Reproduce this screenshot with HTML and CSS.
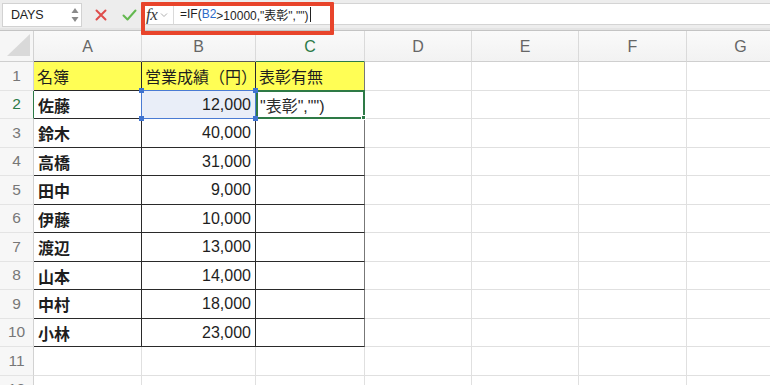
FILE: index.html
```html
<!DOCTYPE html>
<html lang="ja">
<head>
<meta charset="utf-8">
<title>Excel</title>
<link rel="stylesheet" href="styles.css">
</head>
<body>
<div class="app">
  <div class="toolbar">
    <div class="namebox">
      <span class="name">DAYS</span>
      <svg class="stepper" width="8" height="16" viewBox="0 0 8 16"><path d="M4 1 L7.5 6 L0.5 6 Z" fill="#8a8a8a"/><path d="M4 15 L7.5 10 L0.5 10 Z" fill="#8a8a8a"/></svg>
    </div>
    <div class="actions">
      <svg class="cancel" width="12" height="12" viewBox="0 0 12 12"><path d="M1.5 1.5 L10.5 10.5 M10.5 1.5 L1.5 10.5" stroke="#df4d4b" stroke-width="2" stroke-linecap="round"/></svg>
      <svg class="enter" width="15" height="12" viewBox="0 0 15 12"><path d="M1.5 6.5 L5.5 10.5 L13.5 1.5" stroke="#63b84f" stroke-width="2" fill="none" stroke-linecap="round" stroke-linejoin="round"/></svg>
    </div>
    <div class="fxarea">
      <span class="fx">fx</span>
      <svg class="chev" width="8" height="6" viewBox="0 0 8 6"><path d="M1 1.5 L4 4.5 L7 1.5" stroke="#b0b0b0" stroke-width="1" fill="none"/></svg>
    </div>
    <div class="formula"><span>=IF(</span><span class="ref">B2</span><span>&gt;10000,"表彰","")</span><span class="caret"></span></div>
  </div>

  <div class="sheet">
    <div class="corner"><svg width="26" height="24" viewBox="0 0 26 24"><path d="M25 1 L25 23 L2 23 Z" fill="#d9d9d9"/></svg></div>
    <div class="colh hd">A</div>
    <div class="colh hd">B</div>
    <div class="colh hd active">C</div>
    <div class="colh">D</div>
    <div class="colh">E</div>
    <div class="colh">F</div>
    <div class="colh">G</div>

    <div class="rowh">1</div>
    <div class="c t y">名簿</div>
    <div class="c t y">営業成績（円）</div>
    <div class="c t y tr">表彰有無</div>
    <div class="c"></div><div class="c"></div><div class="c"></div><div class="c"></div>

    <div class="rowh active">2</div>
    <div class="c t nm">佐藤</div>
    <div class="c t num sel">12,000<span class="selbox"><i class="h tl"></i><i class="h trh"></i><i class="h bl"></i><i class="h br"></i></span></div>
    <div class="c t tr edit">"表彰","")<span class="editbox"><i class="gh"></i></span></div>
    <div class="c"></div><div class="c"></div><div class="c"></div><div class="c"></div>

    <div class="rowh">3</div>
    <div class="c t nm">鈴木</div>
    <div class="c t num">40,000</div>
    <div class="c t tr"></div>
    <div class="c"></div><div class="c"></div><div class="c"></div><div class="c"></div>

    <div class="rowh">4</div>
    <div class="c t nm">高橋</div>
    <div class="c t num">31,000</div>
    <div class="c t tr"></div>
    <div class="c"></div><div class="c"></div><div class="c"></div><div class="c"></div>

    <div class="rowh">5</div>
    <div class="c t nm">田中</div>
    <div class="c t num">9,000</div>
    <div class="c t tr"></div>
    <div class="c"></div><div class="c"></div><div class="c"></div><div class="c"></div>

    <div class="rowh">6</div>
    <div class="c t nm">伊藤</div>
    <div class="c t num">10,000</div>
    <div class="c t tr"></div>
    <div class="c"></div><div class="c"></div><div class="c"></div><div class="c"></div>

    <div class="rowh">7</div>
    <div class="c t nm">渡辺</div>
    <div class="c t num">13,000</div>
    <div class="c t tr"></div>
    <div class="c"></div><div class="c"></div><div class="c"></div><div class="c"></div>

    <div class="rowh">8</div>
    <div class="c t nm">山本</div>
    <div class="c t num">14,000</div>
    <div class="c t tr"></div>
    <div class="c"></div><div class="c"></div><div class="c"></div><div class="c"></div>

    <div class="rowh">9</div>
    <div class="c t nm">中村</div>
    <div class="c t num">18,000</div>
    <div class="c t tr"></div>
    <div class="c"></div><div class="c"></div><div class="c"></div><div class="c"></div>

    <div class="rowh">10</div>
    <div class="c t nm">小林</div>
    <div class="c t num">23,000</div>
    <div class="c t tr"></div>
    <div class="c"></div><div class="c"></div><div class="c"></div><div class="c"></div>

    <div class="rowh">11</div>
    <div class="c"></div><div class="c"></div><div class="c"></div>
    <div class="c"></div><div class="c"></div><div class="c"></div><div class="c"></div>

    <div class="rowh">12</div>
    <div class="c"></div><div class="c"></div><div class="c"></div>
    <div class="c"></div><div class="c"></div><div class="c"></div><div class="c"></div>
  </div>

  <div class="highlight"></div>
</div>
</body>
</html>
```

FILE: styles.css
```css
* { box-sizing: border-box; }
html, body { margin: 0; padding: 0; }
body {
  width: 770px;
  height: 385px;
  overflow: hidden;
  background: #ffffff;
  font-family: "Liberation Sans", "Noto Sans CJK JP", sans-serif;
  color: #1e1e1e;
}
.app {
  position: relative;
  width: 770px;
  height: 385px;
  overflow: hidden;
}

/* ---------- toolbar ---------- */
.toolbar {
  height: 31px;
  display: flex;
  align-items: center;
  background: #ededed;
  border-bottom: 1px solid #c4c4c4;
  box-shadow: inset 0 -2px 0 #e4e4e4;
  padding-left: 2px;
}
.namebox {
  width: 80px;
  height: 24px;
  margin-top: -1px;
  background: #fff;
  border: 1px solid #d2d2d2;
  display: flex;
  align-items: center;
  justify-content: space-between;
  padding: 0 2px 0 8px;
}
.name {
  font-size: 12.5px;
  color: #222;
  letter-spacing: -0.2px;
}
.stepper { margin-top: 0; }
.actions {
  display: flex;
  align-items: center;
  gap: 15px;
  padding-left: 13px;
  width: 61px;
  margin-top: -1px;
}
.fxarea {
  display: flex;
  align-items: center;
  height: 22px;
  margin-top: -2px;
  width: 30px;
  gap: 3px;
  padding-left: 3px;
  background: #fff;
  border-top: 1px solid #d4d4d4;
  border-bottom: 1px solid #d4d4d4;
}
.fx {
  font-family: "Liberation Serif", "DejaVu Serif", serif;
  font-style: italic;
  font-size: 17px;
  color: #3a3a3a;
  line-height: 1;
  letter-spacing: -0.5px;
}
.chev { margin-top: 1px; }
.formula {
  flex: 1;
  height: 22px;
  margin-top: -2px;
  background: #fff;
  border-top: 1px solid #d4d4d4;
  border-bottom: 1px solid #d4d4d4;
  border-left: 1px solid #dadada;
  display: flex;
  align-items: center;
  padding-left: 6px;
  font-size: 12px;
  color: #1e1e1e;
  white-space: nowrap;
}
.ref { color: #2d6cc8; }
.caret {
  display: inline-block;
  width: 1px;
  height: 15px;
  background: #222;
  margin-left: 2px;
}

/* ---------- sheet ---------- */
.sheet {
  display: grid;
  grid-template-columns: 34px 108px 114px 109px 107px 107px 108px 108px;
  grid-template-rows: 31px repeat(12, 28.5px);
  width: 800px;
}
.sheet > div {
  border-right: 1px solid #e0e0e0;
  border-bottom: 1px solid #e0e0e0;
  white-space: nowrap;
  overflow: visible;
}
.corner {
  background: #f6f6f6;
  display: flex;
  align-items: flex-end;
  justify-content: flex-end;
  padding: 0 2px 4px 0;
  border-bottom-color: #cfcfcf !important;
  border-right-color: #d2d2d2 !important;
}
.colh {
  background: linear-gradient(#fafafa, #f2f2f2);
  display: flex;
  align-items: center;
  justify-content: center;
  font-size: 16px;
  color: #666;
  border-right-color: #dadada !important;
  border-bottom-color: #cfcfcf !important;
  padding-top: 1px;
}
.colh.hd { border-bottom-color: #5a5a5a !important; }
.colh.active {
  color: #2c7a47;
  border-bottom: 1px solid #2c7a47 !important;
}
.rowh {
  background: #f7f7f7;
  display: flex;
  align-items: center;
  justify-content: center;
  font-size: 15.5px;
  color: #777;
  border-right-color: #d2d2d2 !important;
  border-bottom-color: #e4e4e4 !important;
}
.rowh.active {
  color: #2c7a47;
  border-right: 1px solid #2c7a47 !important;
}
.c {
  display: flex;
  align-items: center;
  font-size: 16px;
  padding: 1px 4px 0 4px;
  position: relative;
}
.c.t {
  border-right-color: #2a2a2a !important;
  border-bottom-color: #2a2a2a !important;
}
.c.tr { border-right-color: #777 !important; }
.c.y {
  background: #fffe55;
  padding-left: 3px;
  overflow: hidden;
}
.c.nm { font-weight: bold; }
.c.num { justify-content: flex-end; }
.c.edit { color: #2a2a2a; }

.sel { background: #e9eef8; }
.selbox {
  position: absolute;
  top: -1px;
  left: -1px;
  right: -1px;
  bottom: -1px;
  border: 1px solid #4a7bd3;
  z-index: 2;
}
.h {
  position: absolute;
  width: 5px;
  height: 5px;
  background: #3f73cf;
}
.h.tl { top: -3px; left: -3px; }
.h.trh { top: -3px; right: -3px; }
.h.bl { bottom: -3px; left: -3px; }
.h.br { bottom: -3px; right: -3px; }

.editbox {
  position: absolute;
  top: -1px;
  left: 0;
  right: -1px;
  bottom: -1px;
  border: 2px solid #2e7a46;
  z-index: 1;
}
.gh {
  position: absolute;
  width: 5px;
  height: 5px;
  right: -3px;
  bottom: -3px;
  background: #2e7a46;
  border: 1px solid #fff;
}

/* ---------- annotation ---------- */
.highlight {
  position: absolute;
  left: 141px;
  top: 2px;
  width: 193px;
  height: 33px;
  border: 4px solid #e8442b;
  border-radius: 1px;
  z-index: 5;
}
```
